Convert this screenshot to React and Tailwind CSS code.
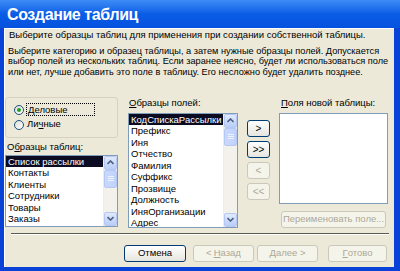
import React from 'react'

const FONT = { fontFamily: '"Liberation Sans", Arial, sans-serif' }

const TABLES = ['Список рассылки', 'Контакты', 'Клиенты', 'Сотрудники', 'Товары', 'Заказы']
const FIELDS = [
  'КодСпискаРассылки', 'Префикс', 'Иня', 'Отчество', 'Фамилия', 'Суффикс',
  'Прозвище', 'Должность', 'ИняОрганизации', 'Адрес',
]

const INTRO = [
  'Выберите категорию и образец таблицы, а затем нужные образцы полей. Допускается',
  'выбор полей из нескольких таблиц. Если заранее неясно, будет ли использоваться поле',
  'или нет, лучше добавить это поле в таблицу. Его несложно будет удалить позднее.',
]

function Chevron({ down }) {
  return (
    <svg width="7" height="5" viewBox="0 0 7 5">
      <path d={down ? 'M0.5 1 L3.5 4 L6.5 1' : 'M0.5 4 L3.5 1 L6.5 4'} fill="none" stroke="#4d6185" strokeWidth="1.6" />
    </svg>
  )
}

function ScrollBar() {
  return (
    <div className="w-[14px] flex flex-col bg-[#f3f1ec] border-l border-[#eeede5]">
      <div className="h-[14px] flex items-center justify-center rounded-[2px] bg-gradient-to-b from-[#e1eafe] to-[#b9cdf6] border border-[#b4c8f6]">
        <Chevron />
      </div>
      <div className="h-[18px] rounded-[2px] bg-gradient-to-r from-[#cad8fb] to-[#c1d2fb] border border-[#b4c8f6] flex flex-col items-center justify-center gap-[1px]">
        <div className="w-[6px] h-[1px] bg-[#eef4fe]" />
        <div className="w-[6px] h-[1px] bg-[#eef4fe]" />
        <div className="w-[6px] h-[1px] bg-[#eef4fe]" />
      </div>
      <div className="flex-1" />
      <div className="h-[14px] flex items-center justify-center rounded-[2px] bg-gradient-to-b from-[#e1eafe] to-[#b9cdf6] border border-[#b4c8f6]">
        <Chevron down />
      </div>
    </div>
  )
}

function ListBox({ items, className }) {
  return (
    <div className={`flex border border-[#7f9db9] bg-white overflow-hidden ${className}`}>
      <div className="flex-1 overflow-hidden">
        {items.map((t, i) => (
          <div
            key={t}
            className={`h-[11.5px] leading-[11.5px] pl-[2px] whitespace-nowrap ${i === 0 ? 'bg-[#0b0b22] text-white' : 'text-black'}`}
          >
            {t}
          </div>
        ))}
      </div>
      <ScrollBar />
    </div>
  )
}

function Btn({ children, disabled, className }) {
  return (
    <div
      className={`flex items-center justify-center rounded-[3px] border ${
        disabled
          ? 'border-[#cac8bb] text-[#aca899] bg-[#f5f4ea]'
          : 'border-[#003c74] text-black bg-gradient-to-b from-white to-[#e6e5de]'
      } ${className}`}
    >
      {children}
    </div>
  )
}

function Radio({ checked, children, focus }) {
  return (
    <div className="flex items-center h-[14px]">
      <div className="w-[10px] h-[10px] rounded-full border border-[#1c5180] bg-gradient-to-br from-[#dcdcd6] to-white flex items-center justify-center">
        {checked && <div className="w-[4px] h-[4px] rounded-full bg-[#21a121]" />}
      </div>
      <div className={`ml-[2px] px-[1px] h-[13px] leading-[12px] ${focus ? 'w-[69px] border border-dotted border-black' : ''}`}>
        {children}
      </div>
    </div>
  )
}

export default function App() {
  return (
    <div className="w-[400px] h-[271px] flex flex-col bg-[#0842d6] text-[9.5px] text-black" style={FONT}>
      {/* Title bar */}
      <div className="h-[28px] flex items-center pl-[7px] bg-gradient-to-b from-[#3e8cf6] via-[#0a5ce6] to-[#0652de]">
        <span className="text-white font-bold text-[16px] tracking-[-0.4px] mt-[2px]">Создание таблиц</span>
      </div>

      {/* Body */}
      <div className="flex-1 flex ml-[4px] mr-[6px] mb-[4px]">
        <div className="flex-1 flex flex-col bg-[#ece9d8] border-t border-l border-white">
          <div className="pl-[4px] leading-[11px] whitespace-nowrap">
            Выберите образцы таблиц для применения при создании собственной таблицы.
          </div>
          <div className="pl-[3px] mt-[6px] leading-[10.3px] text-[9.2px] whitespace-nowrap">
            {INTRO.map(l => <div key={l}>{l}</div>)}
          </div>

          {/* Main area */}
          <div className="flex mt-[20px] h-[132px]">
            {/* Column 1 */}
            <div className="w-[113px] flex flex-col">
              <div className="h-[41px] rounded-[3px] border border-[#d5d2c2] pl-[8px] pt-[5px] flex flex-col gap-[1px]">
                <Radio checked focus>
                  <span className="underline">Д</span>еловые
                </Radio>
                <Radio>
                  Ли<span className="underline">ч</span>ные
                </Radio>
              </div>
              <div className="mt-[3px] pl-[2px] leading-[11px]">
                О<span className="underline">б</span>разцы таблиц:
              </div>
              <ListBox items={TABLES} className="mt-[3px] h-[72px]" />
            </div>

            {/* Column 2 */}
            <div className="w-[110px] ml-[10px] flex flex-col">
              <div className="leading-[11px] pl-[1px]">
                <span className="underline">О</span>бразцы полей:
              </div>
              <ListBox items={FIELDS} className="mt-[5px] h-[115px]" />
            </div>

            {/* Column 3 */}
            <div className="w-[23px] ml-[9px] flex flex-col gap-[4px] pt-[23px] text-[10px]">
              <Btn className="h-[17px]">&gt;</Btn>
              <Btn className="h-[17px]">&gt;&gt;</Btn>
              <Btn disabled className="h-[17px]">&lt;</Btn>
              <Btn disabled className="h-[17px]">&lt;&lt;</Btn>
            </div>

            {/* Column 4 */}
            <div className="w-[109px] ml-[9px] flex flex-col">
              <div className="leading-[11px] pl-[2px]">
                <span className="underline">П</span>оля новой таблицы:
              </div>
              <div className="mt-[5px] h-[91px] border border-[#7f9db9] bg-white" />
              <Btn disabled className="mt-[7px] ml-[2px] w-[105px] h-[17px]">
                Переименовать поле...
              </Btn>
            </div>
          </div>

          {/* Separator */}
          <div className="ml-[6px] w-[378px] mt-[4px] border-t border-[#5d5b51] border-b border-b-white" />

          {/* Bottom buttons */}
          <div className="flex mt-[10px] pl-[119px]">
            <Btn className="w-[62px] h-[17px]">Отмена</Btn>
            <Btn disabled className="ml-[7px] w-[61px] h-[17px]">
              &lt; <span className="underline ml-[2px]">Н</span>азад
            </Btn>
            <Btn disabled className="ml-[3px] w-[61px] h-[17px]">
              <span className="underline">Д</span>алее &gt;
            </Btn>
            <Btn disabled className="ml-[10px] w-[59px] h-[17px]">
              <span className="underline">Г</span>отово
            </Btn>
          </div>
        </div>
      </div>
    </div>
  )
}
